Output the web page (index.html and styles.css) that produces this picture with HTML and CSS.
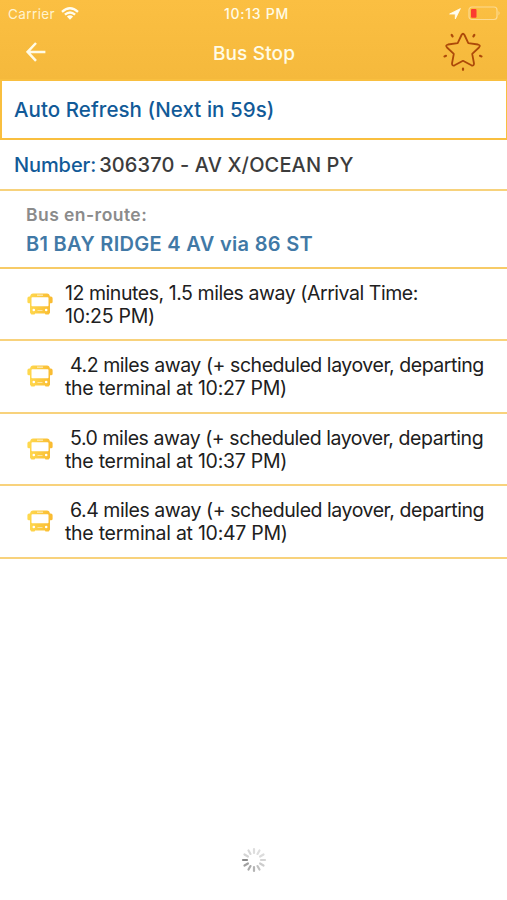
FILE: index.html
```html
<!DOCTYPE html>
<html lang="en">
<head>
<meta charset="utf-8">
<title>Bus Stop</title>
<link rel="stylesheet" href="styles.css">
</head>
<body>
<svg class="defs" width="0" height="0" aria-hidden="true">
  <defs>
    <linearGradient id="gold" x1="0" y1="0" x2="1" y2="0"><stop offset="0" stop-color="#ffda50"/><stop offset="1" stop-color="#f9ba30"/></linearGradient>
    <symbol id="bus" viewBox="0 0 26 22">
      <path fill="url(#gold)" fill-rule="evenodd" d="M6 .5h14q2.500 0 2.900 3h1q1.700 0 1.700 1.700v3.800q0 1.300-1.600 1.300H23V19.600q0 1-.8 1v.2q0 .8-.8.800h-2.600q-.8 0-.8-.800v-.2H8v.2q0 .8-.8.800H4.600q-.8 0-.8-.800v-.2Q3 20.600 3 19.600v-9.300h-1Q.4 10.300.4 9V5.200q0-1.700 1.700-1.700h1Q3.500.500 6 .500zM10 1.700v.8h6v-.8zM5.300 4.200Q4.500 4.200 4.500 5v7.500q0 .8.8.8h15.400q.8 0 .8-.8V5q0-.8-.8-.8zM6.800 15.700a1.300 1.300 0 1 0 0 2.600 1.300 1.300 0 0 0 0-2.600zM19.200 15.700a1.300 1.300 0 1 0 0 2.600 1.300 1.300 0 0 0 0-2.600zM10.500 17.500v.6h5v-.6z"/>
    </symbol>
  </defs>
</svg>
<header class="top">
  <div class="status">
    <div class="carrier"><span>Carrier</span>
      <svg width="18" height="13" viewBox="0 0 18 13" fill="none" stroke="#fffdf0" stroke-width="2.300"><path d="M1 4.800Q9-2.200 17 4.800M3.900 7.700Q9 3.300 14.100 7.700"/><path fill="#fffdf0" stroke="none" d="M5.900 9.500Q9 7 12.100 9.500L9 12.800z"/></svg>
    </div>
    <div class="clock">10:13 PM</div>
    <div class="power">
      <svg width="12" height="12" viewBox="0 0 12 12"><path fill="#fffdf0" stroke="#fffdf0" stroke-width=".8" stroke-linejoin="round" d="M11.400.6 6.300 11V6.100L.6 6z"/></svg>
      <svg width="33" height="15" viewBox="0 0 33 15"><rect x="1" y="1" width="28" height="12.500" rx="3" fill="none" stroke="#fcda91" stroke-width="1.200"/><rect x="3" y="3" width="5.500" height="8.800" rx="1" fill="#fb3b30"/><path d="M30.500 5q2.200 2.200 0 4.400z" fill="#fcda91"/></svg>
    </div>
  </div>
  <nav class="nav">
    <svg width="20" height="20" viewBox="0 0 20 20" fill="none" stroke="#fffbe6" stroke-width="2.500"><path d="M10 1 1.600 9.900 10 18.800M2 9.900h17.400"/></svg>
    <h1>Bus Stop</h1>
    <svg width="40" height="40" viewBox="0 0 40 40" fill="none" stroke="#ad4909" stroke-width="1.800" stroke-linejoin="round" stroke-linecap="round"><path d="M18.500 3Q20 .5 21.500 3L25.300 11.200 35 12.500Q38 13.300 36 15.500L29.200 21.800 31 31.500Q31 34.300 28.400 33.300L20 28.800 11.600 33.300Q9 34.300 9 31.500L10.800 21.800 4 15.500Q2 13.300 5 12.500L14.700 11.200z"/><path stroke-width="2.200" d="m8.700 3 .9 1.300M31.300 3l-.9 1.300M1.500 24.400l1.500-.6M38.500 24.400 37 23.800M20 36.500v1.300"/></svg>
  </nav>
</header>
<main>
  <section class="refresh"><span>Auto Refresh (Next in 59s)</span></section>
  <section class="number"><span class="label">Number:</span><span class="value">306370 - AV X/OCEAN PY</span></section>
  <section class="route"><p class="caption">Bus en-route:</p><h2>B1 BAY RIDGE 4 AV via 86 ST</h2></section>
  <ul class="arrivals">
    <li><svg class="bus"><use href="#bus"/></svg><p>12 minutes, 1.5 miles away (Arrival Time:<br><span>10:25 PM)</span></p></li>
    <li><svg class="bus"><use href="#bus"/></svg><p>&nbsp;4.2 miles away (+ scheduled layover, departing<br><span>the terminal at 10:27 PM)</span></p></li>
    <li><svg class="bus"><use href="#bus"/></svg><p>&nbsp;5.0 miles away (+ scheduled layover, departing<br><span>the terminal at 10:37 PM)</span></p></li>
    <li><svg class="bus"><use href="#bus"/></svg><p>&nbsp;6.4 miles away (+ scheduled layover, departing<br><span>the terminal at 10:47 PM)</span></p></li>
  </ul>
</main>
<footer class="loading">
  <svg width="26" height="26" viewBox="-13 -13 26 26" stroke-width="2.200" stroke-linecap="round">
    <path d="M-7 0h-4" stroke="#888"/><path d="M-7 0h-4" transform="rotate(-30)" stroke="#a0a0a0"/><path d="M-7 0h-4" transform="rotate(-60)" stroke="#aaa"/><path d="M-7 0h-4" transform="rotate(-90)" stroke="#b4b4b4"/><path d="M-7 0h-4" transform="rotate(-120)" stroke="#c2c2c2"/><path d="M-7 0h-4" transform="rotate(-150)" stroke="#ccc"/><path d="M-7 0h-4" transform="rotate(180)" stroke="#d4d4d4"/><path d="M-7 0h-4" transform="rotate(150)" stroke="#dcdcdc"/><path d="M-7 0h-4" transform="rotate(120)" stroke="#dedede"/><path d="M-7 0h-4" transform="rotate(90)" stroke="#ddd"/><path d="M-7 0h-4" transform="rotate(60)" stroke="#d8d8d8"/><path d="M-7 0h-4" transform="rotate(30)" stroke="#d4d4d4"/>
  </svg>
</footer>
</body>
</html>
```
FILE: styles.css
```css
* { box-sizing: border-box; margin: 0; padding: 0; }
body { width: 507px; height: 900px; display: flex; flex-direction: column; background: #fff; font-family: Inter, "Liberation Sans", sans-serif; overflow: hidden; }
svg { display: block; flex: none; }
.defs { position: absolute; }
.top { height: 79px; background: linear-gradient(#fbbf42, #f5b93c); color: #fffbe6; }
.status { height: 27px; display: grid; grid-template-columns: 1fr 1fr 1fr; align-items: center; padding: 0 6px 0 8px; font-size: 13.500px; }
.carrier { display: flex; align-items: center; gap: 6px; letter-spacing: .4px; color: #fff3cf; }
.clock { text-align: center; font-weight: 500; font-size: 14px; letter-spacing: .7px; padding-left: 4px; }
.power { display: flex; justify-content: flex-end; align-items: center; gap: 7px; }
.nav { height: 52px; display: flex; align-items: center; padding: 0 24px 2px 26px; }
.nav h1 { flex: 1; text-align: center; font-size: 19px; font-weight: 500; letter-spacing: .15px; padding: 2px 0 0 19px; }
.refresh { height: 61px; border: 2px solid #f9bf3f; border-right-width: 1px; display: flex; align-items: center; padding: 0 0 0 12px; color: #115a98; font-size: 20.500px; font-weight: 450; letter-spacing: .06px; }
.number { height: 51px; border-bottom: 2px solid #f7d27c; display: flex; align-items: center; gap: 3px; padding: 1px 0 0 14px; font-size: 20px; font-weight: 500; }
.label { color: #115a98; font-weight: 450; letter-spacing: -.1px; }
.value { color: #3c3c3c; letter-spacing: .13px; }
.route { height: 77.500px; border-bottom: 2px solid #f7cb67; padding: 12px 26px 0; font-weight: 600; }
.caption { color: #8b8b8b; font-size: 17.500px; line-height: 24px; letter-spacing: .45px; }
.route h2 { color: #4179a6; font-size: 20px; line-height: 35px; font-weight: 600; letter-spacing: .31px; }
.arrivals { list-style: none; }
.arrivals li { height: 72.500px; border-bottom: 2px solid #f8d27c; display: flex; align-items: center; padding: 2px 0 0 27px; gap: 12px; }
.arrivals p { font-size: 19.500px; line-height: 23px; color: #202020; white-space: nowrap; letter-spacing: -.45px; }
.arrivals span { letter-spacing: -.27px; }
.bus { width: 26px; height: 22px; margin-bottom: 2px; }
.loading { margin-top: auto; height: 53px; display: flex; justify-content: center; }
```
